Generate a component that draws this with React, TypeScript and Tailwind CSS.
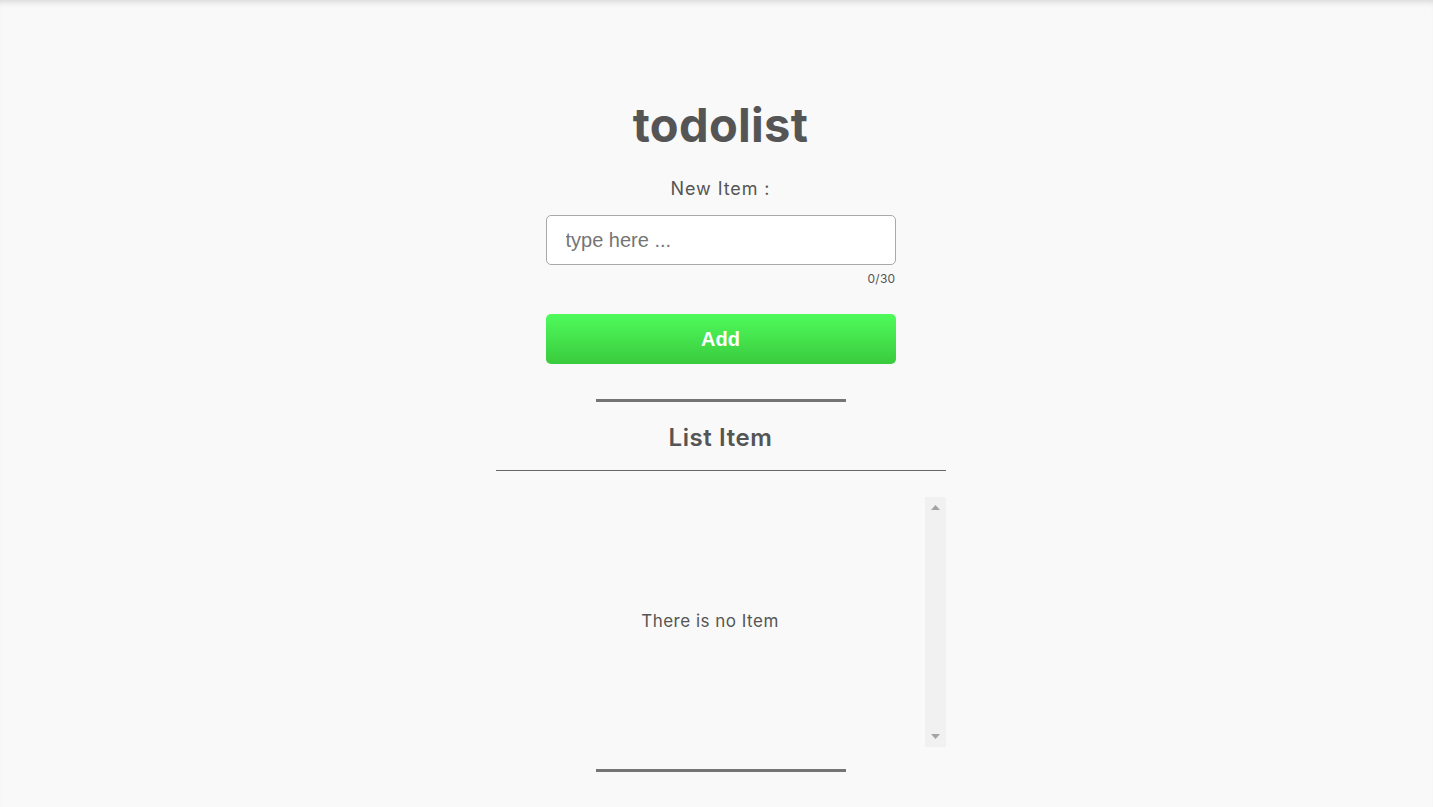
import { useState } from "react";

const MAX_LEN = 30;

export default function App() {
  const [text, setText] = useState("");
  const [items, setItems] = useState<string[]>([]);

  const addItem = () => {
    if (!text.trim()) return;
    setItems((prev) => [...prev, text.trim()]);
    setText("");
  };

  return (
    <div className="min-h-[807px] bg-[#f9f9f9] shadow-[inset_0_6px_6px_-4px_rgba(0,0,0,0.14)] font-['Inter','Noto_Sans',sans-serif] text-[#555]">
      <div className="flex flex-col items-center pt-[97px] pl-[8px]">
        <h1 className="text-[47px] leading-[56px] font-bold tracking-[0.3px] text-[#555]">
          todolist
        </h1>

        <p className="mt-[22px] text-[18px] leading-[27px] tracking-[0.9px] text-[#555]">
          New Item :
        </p>

        <div className="mt-[13px] w-[350px] flex flex-col">
          <input
            value={text}
            maxLength={MAX_LEN}
            onChange={(e) => setText(e.target.value)}
            placeholder="type here ..."
            className="h-[50px] w-full rounded-[5px] border border-[#a9a9a9] bg-white px-[19px] font-['Liberation_Sans',Arial,sans-serif] text-[20px] text-[#555] placeholder:text-[#757575] outline-none"
          />
          <span className="mt-[6px] self-end text-[12px] leading-[16px] tracking-[0.3px] text-[#555]">
            {text.length}/{MAX_LEN}
          </span>
        </div>

        <button
          onClick={addItem}
          className="mt-[27px] h-[50px] w-[350px] rounded-[5px] bg-linear-to-b from-[#4ffb5b] to-[#3acb3e] font-['Liberation_Sans',Arial,sans-serif] text-[20px] font-bold text-white"
        >
          Add
        </button>

        <div className="mt-[35px] h-[3px] w-[250px] bg-[#757575]" />

        <h2 className="mt-[20px] text-[24px] leading-[32px] font-semibold tracking-[0.6px] text-[#555]">
          List Item
        </h2>

        <div className="mt-[16px] h-px w-[450px] bg-[#666]" />

        <div className="mt-[26px] flex h-[250px] w-[450px]">
          <div className="flex flex-1 flex-col items-center justify-center gap-2 overflow-hidden">
            {items.length === 0 ? (
              <p className="text-[17px] tracking-[0.5px] text-[#555]">There is no Item</p>
            ) : (
              items.map((item, i) => (
                <p key={i} className="text-[17px] tracking-[0.5px] text-[#555]">
                  {item}
                </p>
              ))
            )}
          </div>
          {/* scrollbar track */}
          <div className="flex w-[21px] flex-col items-center justify-between bg-[#f1f1f1] py-[8px]">
            <svg width="9" height="5" viewBox="0 0 9 5">
              <path d="M4.5 0L9 5H0z" fill="#a3a3a3" />
            </svg>
            <svg width="9" height="5" viewBox="0 0 9 5">
              <path d="M0 0h9L4.5 5z" fill="#a3a3a3" />
            </svg>
          </div>
        </div>

        <div className="mt-[22px] h-[3px] w-[250px] bg-[#757575]" />
      </div>
    </div>
  );
}
